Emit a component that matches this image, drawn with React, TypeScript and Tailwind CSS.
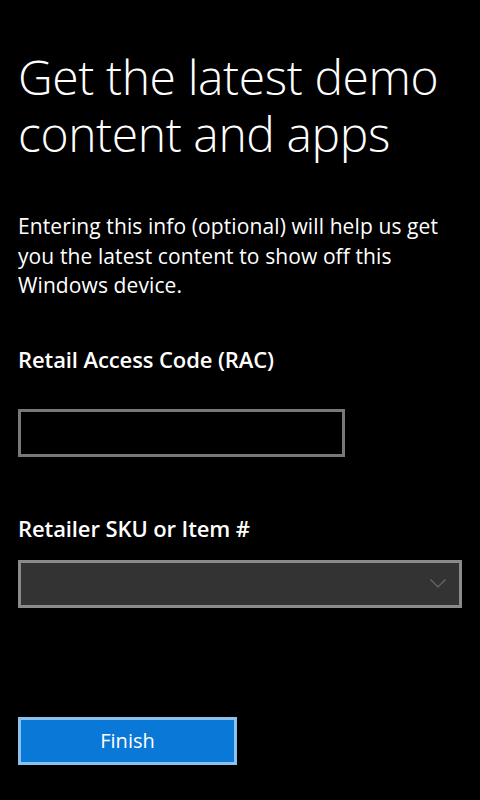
export default function App() {
  return (
    <div
      className="h-[800px] w-[480px] overflow-hidden bg-black text-white"
      style={{ fontFamily: '"Open Sans", "Noto Sans", sans-serif' }}
    >
      <div className="flex flex-col px-[18px] pt-[48px]">
        <h1 className="text-[48px] font-light leading-[57px] tracking-[-0.4px]">
          Get the latest demo content and apps
        </h1>

        <p className="mt-[50px] max-w-[446px] text-[21px] leading-[29.5px] tracking-[0.1px]">
          Entering this info (optional) will help us get you the latest content
          to show off this Windows device.
        </p>

        <label className="mt-[44px] text-[22px] font-semibold leading-[28px] tracking-[-0.1px]">
          Retail Access Code (RAC)
        </label>
        <input
          type="text"
          className="mt-[36px] h-[48px] w-[327px] border-[3px] border-[#787878] bg-black px-2 text-white outline-none"
        />

        <label className="mt-[57px] text-[22px] font-semibold leading-[28px] tracking-[-0.1px]">
          Retailer SKU or Item #
        </label>
        <div className="mt-[18px] flex h-[48px] w-[444px] items-center justify-end border-[3px] border-[#8a8a8a] bg-[#333333] pr-[13px]">
          <svg viewBox="0 0 16 9" className="h-[9px] w-[16px]" aria-hidden="true">
            <path d="M0.5 0.5 L8 8 L15.5 0.5" fill="none" stroke="#6a6a6a" strokeWidth="1.2" />
          </svg>
        </div>

        <button className="mt-[109px] h-[48px] w-[219px] border-[3px] border-[#8cc1ec] bg-[#0a78d7] text-[20px] leading-none text-white">
          Finish
        </button>
      </div>
    </div>
  );
}
